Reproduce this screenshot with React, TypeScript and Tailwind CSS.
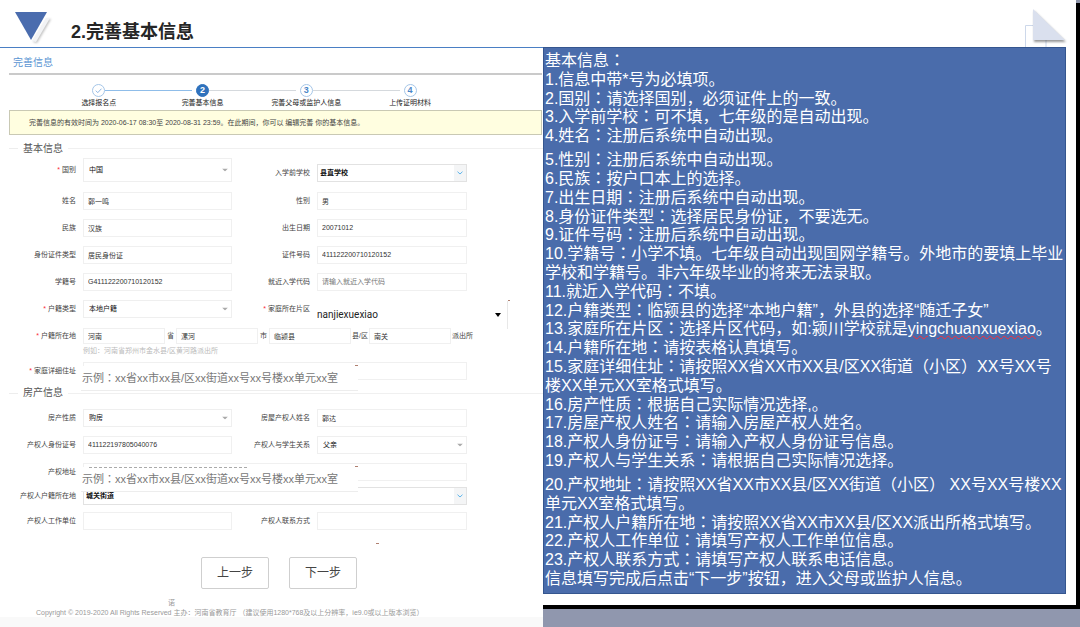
import { useState } from 'react'
import type { ReactNode } from 'react'
import clsx from 'clsx'

const steps = ['选择报名点', '完善基本信息', '完善父母或监护人信息', '上传证明材料']

const instructions: { text: string; spaced?: boolean; link?: string; after?: string }[] = [
  { text: '基本信息：' },
  { text: '1.信息中带*号为必填项。' },
  { text: '2.国别：请选择国别，必须证件上的一致。' },
  { text: '3.入学前学校：可不填，七年级的是自动出现。' },
  { text: '4.姓名：注册后系统中自动出现。' },
  { text: '5.性别：注册后系统中自动出现。', spaced: true },
  { text: '6.民族：按户口本上的选择。' },
  { text: '7.出生日期：注册后系统中自动出现。' },
  { text: '8.身份证件类型：选择居民身份证，不要选无。' },
  { text: '9.证件号码：注册后系统中自动出现。' },
  { text: '10.学籍号：小学不填。七年级自动出现国网学籍号。外地市的要填上毕业' },
  { text: '学校和学籍号。非六年级毕业的将来无法录取。' },
  { text: '11.就近入学代码：不填。' },
  { text: '12.户籍类型：临颍县的选择“本地户籍”，外县的选择“随迁子女”' },
  { text: '13.家庭所在片区：选择片区代码，如:颍川学校就是', link: 'yingchuanxuexiao', after: '。' },
  { text: '14.户籍所在地：请按表格认真填写。' },
  { text: '15.家庭详细住址：请按照XX省XX市XX县/区XX街道（小区）XX号XX号' },
  { text: '楼XX单元XX室格式填写。' },
  { text: '16.房产性质：根据自己实际情况选择,。' },
  { text: '17.房屋产权人姓名：请输入房屋产权人姓名。' },
  { text: '18.产权人身份证号：请输入产权人身份证号信息。' },
  { text: '19.产权人与学生关系：请根据自己实际情况选择。' },
  { text: '20.产权地址：请按照XX省XX市XX县/区XX街道（小区） XX号XX号楼XX', spaced: true },
  { text: '单元XX室格式填写。' },
  { text: '21.产权人户籍所在地：请按照XX省XX市XX县/区XX派出所格式填写。' },
  { text: '22.产权人工作单位：请填写产权人工作单位信息。' },
  { text: '23.产权人联系方式：请填写产权人联系电话信息。' },
  { text: '信息填写完成后点击“下一步”按钮，进入父母或监护人信息。' },
]

const Row = ({ children, className }: { children: ReactNode; className?: string }) => (
  <div className={clsx('grid grid-cols-[83fr_149fr_85fr_150fr_76fr] items-center', className ?? 'h-[27px]')}>{children}</div>
)

const Label = ({ id, text, required }: { id: string; text: string; required?: boolean }) => (
  <label htmlFor={id} className="pr-[7px] text-right whitespace-nowrap">
    {required && <span className="mr-[2px] text-red-500">*</span>}
    {text}
  </label>
)

type FieldProps = { id: string; value?: string; placeholder?: string; className?: string; label?: string }

const TextField = ({ id, value = '', placeholder, className, label }: FieldProps) => (
  <input
    id={id}
    type="text"
    aria-label={label}
    defaultValue={value}
    placeholder={placeholder}
    className={clsx('min-w-0 border border-[#f0f0f0] bg-white px-[4px] text-[#333] placeholder:text-[#777]', className ?? 'h-[18px] w-full')}
  />
)

const SelectField = ({ id, value, className, boxed }: FieldProps & { boxed?: boolean }) => (
  <div className={clsx('relative', className ?? 'h-[18px]')}>
    <select
      id={id}
      className={clsx(
        'h-full w-full appearance-none border bg-white text-[#111]',
        boxed ? 'border-[#e2e2e2] px-[2px] font-bold' : 'border-[#efefef] px-[5px]'
      )}
    >
      <option>{value}</option>
    </select>
    {boxed ? (
      <span className="pointer-events-none absolute inset-y-px right-px flex w-[12px] items-center justify-center bg-[#f4f5f6]">
        <svg viewBox="0 0 6 4" className="h-[4px] w-[6px] fill-none stroke-[#5db4ec]">
          <path d="M.5.7L3 3 5.500.7" />
        </svg>
      </span>
    ) : (
      <svg viewBox="0 0 6 3" className="pointer-events-none absolute top-1/2 right-[4px] h-[3px] w-[6px] -translate-y-1/2 fill-[#aaa]">
        <path d="M0 0h6L3 3z" />
      </svg>
    )}
  </div>
)

const SectionTitle = ({ children, className }: { children: string; className: string }) => (
  <div className={clsx('flex items-center pl-[9px]', className)}>
    <span className="h-px w-[9px] bg-[#ededed]" />
    <h2 className="mx-[5px] text-[10px] text-[#555]">{children}</h2>
    <span className="h-px flex-1 bg-[#f0f0f0]" />
  </div>
)

// Full-width colons sit in the middle of their cell in the TC face
const Punctuated = ({ text }: { text: string }) => (
  <>
    {text.split(/(：)/).map((part, index) =>
      part === '：' ? (
        <span key={index} className="font-['Liberation_Sans','Noto_Sans_CJK_TC',sans-serif]" lang="zh-TW">
          {part}
        </span>
      ) : (
        part
      )
    )}
  </>
)

const AddressExample = ({ cut }: { cut?: boolean }) => (
  <div className="pointer-events-none absolute top-[4px] -left-[2px] h-[25px] w-[277px] border-b border-[#ededed] bg-white pl-[1px] text-[11px] leading-[24px] whitespace-nowrap text-[#777]">
    <Punctuated text="示例：xx省xx市xx县/区xx街道xx号xx号楼xx单元xx室" />
    <span className="absolute -top-px right-0 h-px w-[3px] bg-[#b08070]" />
    {cut && <span className="absolute top-0 left-[8px] w-[158px] border-t border-dashed border-[#aaa]" />}
  </div>
)

const StepBar = ({ current }: { current: number }) => (
  <ol className="flex h-[35px] pt-[9px] pr-[81px] pl-[47px]">
    {steps.map((step, index) => {
      const done = index + 1 < current
      const last = index === steps.length - 1

      return (
        <li key={step} className="flex flex-1 flex-col">
          <div className="flex items-center">
            <span className={clsx('mr-[4px] h-px flex-1', index === 0 ? 'bg-transparent' : index < current ? 'bg-[#8fbde9]' : 'bg-[#d5d9dd]')} />
            <span
              className={clsx(
                'flex size-[13px] items-center justify-center rounded-full border text-[9px] leading-none font-bold',
                index + 1 === current ? 'border-[#2f72bd] bg-[#2f72bd] text-white' : 'border-[#a5c6e8] text-[#4b86c8]'
              )}
            >
              {done ? (
                <svg viewBox="0 0 10 10" className="size-[9px] fill-none stroke-[#7fade0]">
                  <path d="M2 5.200l2.200 2.200L8.300 3" />
                </svg>
              ) : (
                index + 1
              )}
            </span>
            <span className={clsx('h-px flex-1 pr-[4px]', last ? 'bg-transparent' : done ? 'bg-[#8fbde9]' : 'bg-[#d5d9dd]')} />
          </div>
          <span className="text-center leading-[12px] whitespace-nowrap text-[#222]">{step}</span>
        </li>
      )
    })}
  </ol>
)

const Header = () => (
  <header className="relative flex h-[47px] items-center border-r-4 border-black bg-white pt-[16px] pl-[71px]">
    <svg viewBox="0 0 44 36" className="absolute top-[10px] left-[12px] h-[36px] w-[44px]">
      <g className="drop-shadow-[1px_1px_1px_rgba(0,0,0,0.25)]">
        <path d="M34 8h4L24 32l-4-1z" fill="#f2f3f5" />
      </g>
      <path d="M3 2h32L19 30z" fill="#4a6cae" />
    </svg>
    <h1 className="text-[18px] leading-[24px] font-bold whitespace-nowrap text-[#262626]">2.完善基本信息</h1>
    <svg viewBox="0 0 46 40" className="absolute right-[6px] bottom-0 h-[40px] w-[46px]">
      <path d="M1.500 40V18.500h20.500V40" fill="none" stroke="#cdd8ea" />
      <path d="M9 2v31h32z" fill="#dae0ee" className="drop-shadow-[1px_2px_1px_rgba(0,0,0,0.4)]" />
    </svg>
    <span className="absolute top-0 -right-1 h-[3px] w-1 bg-[#8f96ab]" />
  </header>
)

const RegistrationForm = () => {
  const [district, setDistrict] = useState('nanjiexuexiao')

  return (
    <form className="flex min-w-0 flex-col border-t border-[#4a7fc4] bg-white" onSubmit={event => event.preventDefault()}>
      <div className="mr-px ml-[9px] flex h-[27px] items-center border-b-2 border-[#cacaca] pt-[4px] pl-[4px] text-[10px] text-[#5b95d3]">
        完善信息
      </div>

      <StepBar current={2} />

      <p className="mr-px ml-[9px] flex h-[25px] items-center border border-[#c9c9b4] bg-[#fffee0] pl-[19px] whitespace-nowrap text-[#444]">
        完善信息的有效时间为 2020-06-17 08:30至 2020-08-31 23:59。在此期间，你可以 编辑完善 你的基本信息。
      </p>

      <SectionTitle className="mt-[4px] h-[19px]">基本信息</SectionTitle>
      <Row className="h-[29px] pb-[5px]">
        <Label id="country" text="国别" required />
        <SelectField id="country" value="中国" className="h-[24px]" />
        <span className="pt-[5px] text-right">
          <Label id="school" text="入学前学校" />
        </span>
        <span className="pt-[5px]">
          <SelectField id="school" value="县直学校" boxed />
        </span>
      </Row>
      <Row>
        <Label id="name" text="姓名" />
        <TextField id="name" value="郭一鸣" />
        <Label id="gender" text="性别" />
        <TextField id="gender" value="男" />
      </Row>
      <Row>
        <Label id="nation" text="民族" />
        <TextField id="nation" value="汉族" />
        <Label id="birthday" text="出生日期" />
        <TextField id="birthday" value="20071012" />
      </Row>
      <Row>
        <Label id="idType" text="身份证件类型" />
        <TextField id="idType" value="居民身份证" />
        <Label id="idNumber" text="证件号码" />
        <TextField id="idNumber" value="411122200710120152" />
      </Row>
      <Row>
        <Label id="studentNo" text="学籍号" />
        <TextField id="studentNo" value="G411122200710120152" />
        <Label id="schoolCode" text="就近入学代码" />
        <TextField id="schoolCode" placeholder="请输入就近入学代码" />
      </Row>
      <Row>
        <Label id="residence" text="户籍类型" required />
        <SelectField id="residence" value="本地户籍" />
        <Label id="district" text="家庭所在片区" required />
        <div className="relative h-full">
          <div className="absolute top-[6px] left-0 h-[28px] w-[191px] border-r border-[#e8e8e8] bg-white">
            <select
              id="district"
              value={district}
              onChange={event => setDistrict(event.target.value)}
              className="h-full w-full appearance-none font-['Roboto',sans-serif] text-[10px] text-[#222]"
            >
              <option>nanjiexuexiao</option>
              <option>yingchuanxuexiao</option>
            </select>
            <svg viewBox="0 0 6 4" className="pointer-events-none absolute top-[12px] right-[6px] h-[4px] w-[6px]">
              <path d="M0 0h6L3 4z" />
            </svg>
            <span className="absolute -top-px -right-[3px] h-px w-[2px] bg-[#b08070]" />
          </div>
        </div>
      </Row>
      <Row className="h-[23px] pt-[4px]">
        <Label id="province" text="户籍所在地" required />
        <div className="relative col-span-4 flex items-center whitespace-nowrap">
          <TextField id="province" value="河南" className="h-[16px] w-[82px]" />
          <span className="mx-[2px]">省</span>
          <TextField id="city" label="市" value="漯河" className="h-[16px] w-[82px]" />
          <span className="mx-[2px]">市</span>
          <TextField id="county" label="县/区" value="临颍县" className="h-[16px] w-[82px]" />
          <span className="mx-px">县/区</span>
          <TextField id="station" label="派出所" value="南关" className="h-[16px] w-[82px]" />
          <span className="mx-px">派出所</span>
        </div>
      </Row>
      <Row className="h-[12px]">
        <span className="col-span-4 col-start-2 text-[#bbb]">例如：河南省郑州市金水县/区黄河路派出所</span>
      </Row>
      <Row className="h-[28px]">
        <Label id="address" text="家庭详细住址" required />
        <div className="relative col-span-3 flex">
          <TextField id="address" />
          <AddressExample />
        </div>
      </Row>

      <SectionTitle className="mb-[3px] h-[16px]">房产信息</SectionTitle>
      <Row>
        <Label id="houseType" text="房产性质" />
        <SelectField id="houseType" value="购房" />
        <Label id="owner" text="房屋产权人姓名" />
        <TextField id="owner" value="郭达" />
      </Row>
      <Row>
        <Label id="ownerId" text="产权人身份证号" />
        <TextField id="ownerId" value="411122197805040076" />
        <Label id="relation" text="产权人与学生关系" />
        <SelectField id="relation" value="父亲" />
      </Row>
      <Row>
        <Label id="houseAddress" text="产权地址" />
        <div className="relative z-10 col-span-3 flex">
          <TextField id="houseAddress" />
          <AddressExample cut />
        </div>
      </Row>
      <Row className="h-[22px]">
        <Label id="ownerResidence" text="产权人户籍所在地" />
        <SelectField id="ownerResidence" value="城关街道" className="col-span-3 h-[18px]" boxed />
      </Row>
      <Row className="h-[28px]">
        <Label id="workplace" text="产权人工作单位" />
        <TextField id="workplace" />
        <Label id="phone" text="产权人联系方式" />
        <TextField id="phone" />
      </Row>

      <div className="relative mt-[22px] flex gap-[20px] pl-[201px] text-[12px] text-[#444]">
        <span className="absolute -top-[14px] left-[376px] h-px w-[3px] bg-[#b08070]" />
        <button type="button" className="h-[32px] w-[68px] rounded-[2px] border border-[#cfcfcf]">
          上一步
        </button>
        <button type="submit" className="h-[32px] w-[68px] rounded-[2px] border border-[#cfcfcf]">
          下一步
        </button>
      </div>

      <footer className="mt-[8px] text-[#999]">
        <p className="h-[12px] pl-[168px] leading-[12px]">诺</p>
        <p className="h-[8px] pl-[36px] leading-[8px] whitespace-nowrap">
          Copyright © 2019-2020 All Rights Reserved 主办：河南省教育厅 （建议使用1280*768及以上分辨率，ie9.0或以上版本浏览）
        </p>
      </footer>
      <div className="min-h-[10px] flex-1 bg-[#f9f9f9]" />
    </form>
  )
}

const Instructions = () => (
  <aside className="flex min-w-0 flex-col bg-[#9097ae]">
    <div className="flex flex-1 flex-col border-r-4 border-b-4 border-black bg-white pr-[10px] pb-[11px]">
      <div className="flex flex-1 flex-col justify-between border border-[#35568f] bg-[#4a6cab] px-px pt-[4px] pb-[5px] text-[16px] leading-[18px] whitespace-nowrap text-white">
        {instructions.map(({ text, spaced, link, after }) => (
          <p key={text} className={clsx('h-[18px]', spaced && 'mt-[5px]')}>
            <Punctuated text={text} />
            {link && <span className="underline decoration-red-500 decoration-wavy decoration-1">{link}</span>}
            {after}
          </p>
        ))}
      </div>
    </div>
    <div className="h-[18px]" />
  </aside>
)

export default function App() {
  return (
    <div
      lang="zh-CN"
      className="flex min-h-screen flex-col overflow-hidden bg-white font-['Liberation_Sans','Noto_Sans_CJK_SC',sans-serif] text-[7px] leading-[10px] text-[#444]"
    >
      <Header />
      <main className="grid flex-1 grid-cols-[543fr_537fr]">
        <RegistrationForm />
        <Instructions />
      </main>
    </div>
  )
}
